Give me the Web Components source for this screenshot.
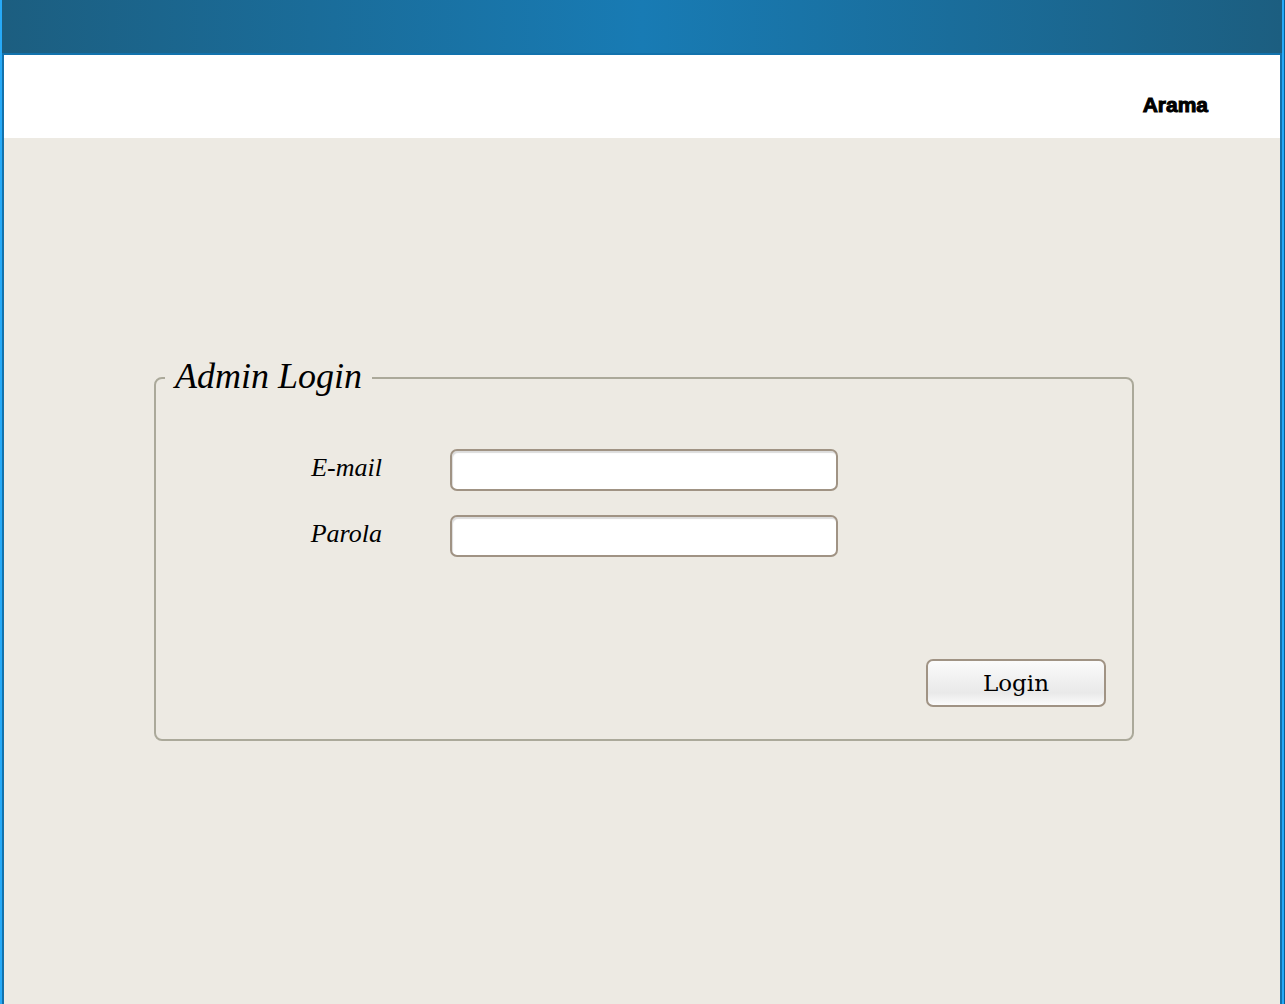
<!DOCTYPE html>
<html lang="tr">
<head>
<meta charset="utf-8">
<meta name="viewport" content="width=device-width, initial-scale=1">
<title>Admin Login</title>
<style>
  body { margin: 0; background: #0b5c93; }
</style>
</head>
<body>
<page-frame>
  <top-banner slot="banner"></top-banner>
  <search-bar>Arama</search-bar>
  <login-panel heading="Admin Login" action="Login">
    <login-field label="E-mail" type="email"></login-field>
    <login-field label="Parola" type="password"></login-field>
  </login-panel>
</page-frame>
<script>
  class BaseElement extends HTMLElement {
    render(html) {
      const root = this.attachShadow({ mode: "open" });
      root.innerHTML = html;
      return root;
    }
  }

  customElements.define("page-frame", class extends BaseElement {
    constructor() {
      super();
      this.render(`
        <style>
          :host { display: flex; flex-direction: column; box-sizing: border-box; min-height: 100vh;
                  margin-right: 1px; border: solid #27aaf8; border-width: 0 2px; background: #1272ac; }
          main { flex: 1; margin: 0 2px; background: #edeae3; }
        </style>
        <slot name="banner"></slot>
        <main><slot></slot></main>`);
    }
  });

  customElements.define("top-banner", class extends BaseElement {
    constructor() {
      super();
      this.render(`
        <style>
          :host { display: block; }
          header { height: 53px; border-bottom: 2px solid #1272ac;
                   background: linear-gradient(90deg, #1c5e80, #187bb4 50%, #1c5e80); }
        </style>
        <header></header>`);
    }
  });

  customElements.define("search-bar", class extends BaseElement {
    constructor() {
      super();
      this.render(`
        <style>
          :host { display: block; background: #fff; }
          nav { display: flex; justify-content: flex-end; padding: 35px 72px 18px 0; }
          a { color: #000; text-decoration: none; -webkit-text-stroke: 1px #000;
              font: bold 21px/30px "Liberation Sans", sans-serif; }
        </style>
        <nav><a href="#"><slot></slot></a></nav>`);
    }
  });

  customElements.define("login-panel", class extends BaseElement {
    constructor() {
      super();
      const root = this.render(`
        <style>
          :host { display: block; padding: 219px 146px 40px 150px; color: #000; }
          fieldset { margin: 0; min-width: 0; padding: 50px 26px 32px 0;
                     border: 2px solid #aba99a; border-radius: 8px; }
          legend { margin-left: 9px; padding: 0 10px 4px;
                   font: italic 36px/38px "Liberation Serif", serif; }
          .fields { display: flex; flex-direction: column; gap: 24px; }
          .actions { display: flex; justify-content: flex-end; margin-top: 102px; }
          button { width: 180px; height: 48px; padding: 0; color: #000;
                   border: 2px solid #a09384; border-radius: 7px;
                   background: linear-gradient(#fbfbfb, #e9e9e9 72%, #fbfbfb);
                   font: 23px/28px "DejaVu Serif", serif; }
        </style>
        <form>
          <fieldset>
            <legend></legend>
            <div class="fields"><slot></slot></div>
            <div class="actions"><button type="button"></button></div>
          </fieldset>
        </form>`);
      root.querySelector("legend").textContent = this.getAttribute("heading");
      root.querySelector("button").textContent = this.getAttribute("action");
    }
  });

  customElements.define("login-field", class extends BaseElement {
    constructor() {
      super();
      const root = this.render(`
        <style>
          :host { display: grid; grid-template-columns: 226px minmax(0, 388px); column-gap: 68px; align-items: center; }
          label { padding-bottom: 4px; text-align: right; font: italic 26px/30px "Liberation Serif", serif; }
          input { box-sizing: border-box; width: 100%; height: 42px; margin: 0; padding: 0 8px;
                  border: 2px solid #a09384; border-radius: 7px; background: #fff;
                  box-shadow: inset 1px 2px 1px #dcdcdc; font: 20px "Liberation Sans", sans-serif; }
        </style>
        <label for="field"></label>
        <input id="field">`);
      root.querySelector("label").textContent = this.getAttribute("label");
      root.querySelector("input").type = this.getAttribute("type");
    }
  });
</script>
</body>
</html>
